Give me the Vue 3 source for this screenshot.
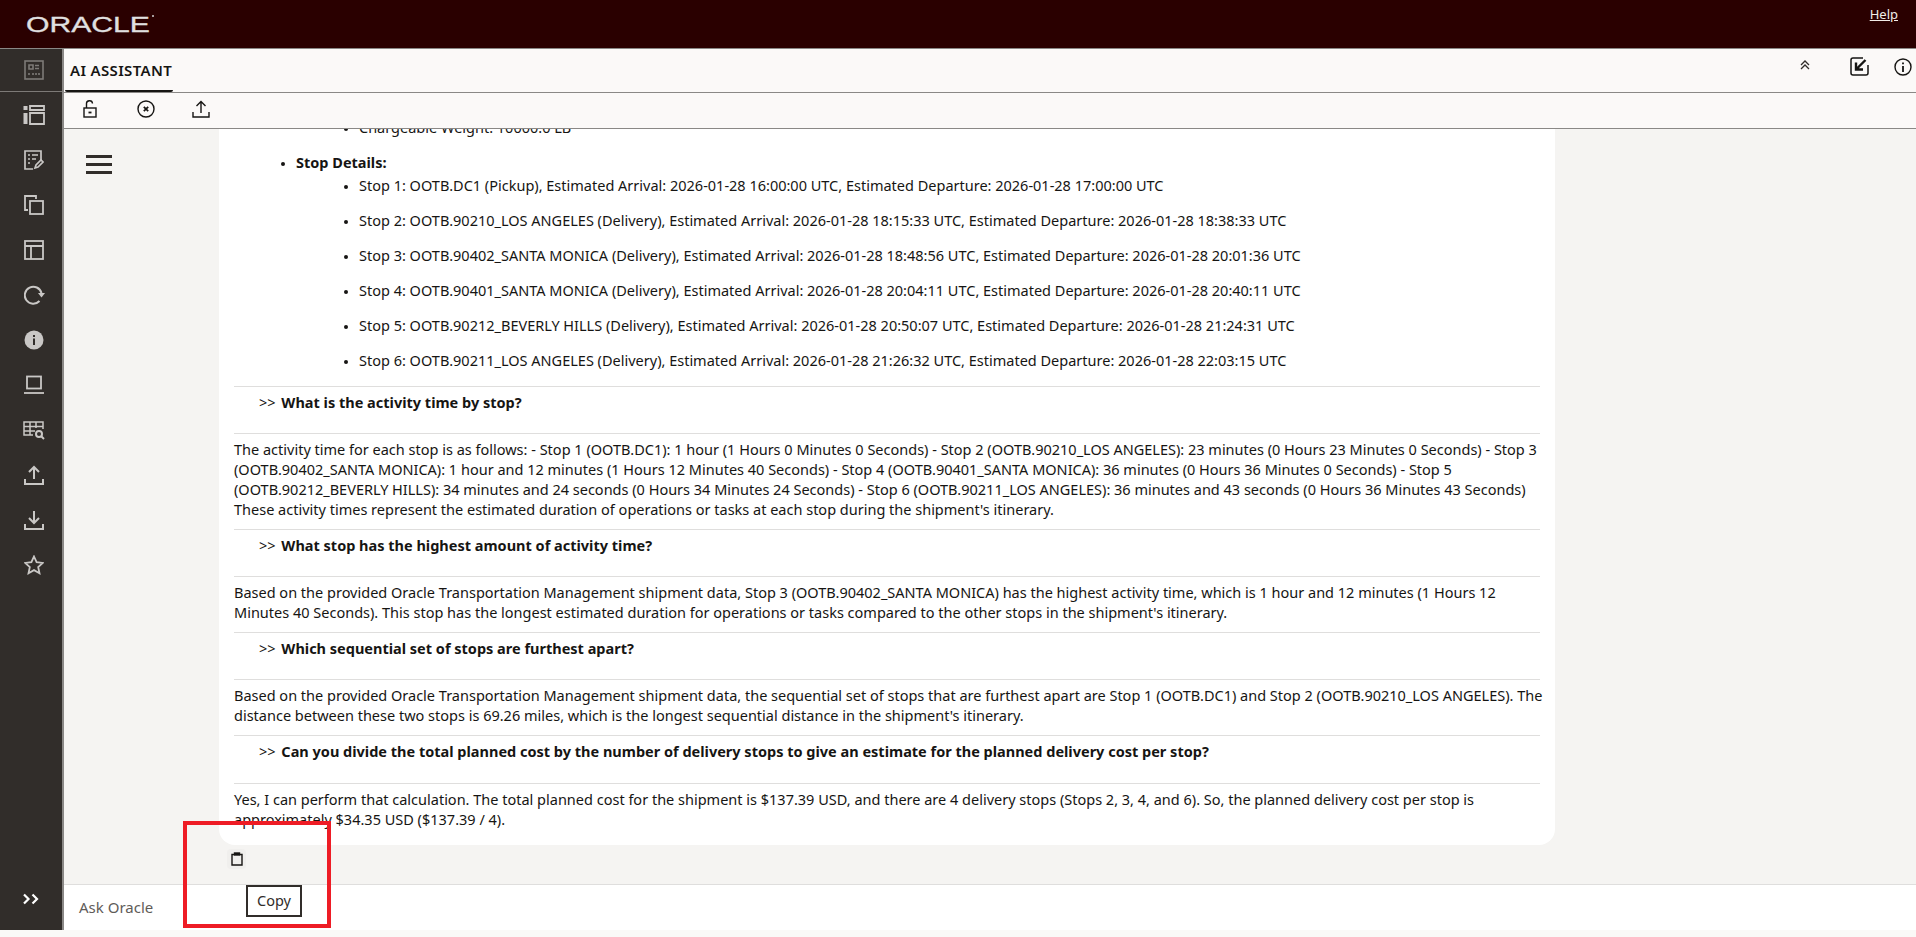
<script setup>
const stops = [
  'Stop 1: OOTB.DC1 (Pickup), Estimated Arrival: 2026-01-28 16:00:00 UTC, Estimated Departure: 2026-01-28 17:00:00 UTC',
  'Stop 2: OOTB.90210_LOS ANGELES (Delivery), Estimated Arrival: 2026-01-28 18:15:33 UTC, Estimated Departure: 2026-01-28 18:38:33 UTC',
  'Stop 3: OOTB.90402_SANTA MONICA (Delivery), Estimated Arrival: 2026-01-28 18:48:56 UTC, Estimated Departure: 2026-01-28 20:01:36 UTC',
  'Stop 4: OOTB.90401_SANTA MONICA (Delivery), Estimated Arrival: 2026-01-28 20:04:11 UTC, Estimated Departure: 2026-01-28 20:40:11 UTC',
  'Stop 5: OOTB.90212_BEVERLY HILLS (Delivery), Estimated Arrival: 2026-01-28 20:50:07 UTC, Estimated Departure: 2026-01-28 21:24:31 UTC',
  'Stop 6: OOTB.90211_LOS ANGELES (Delivery), Estimated Arrival: 2026-01-28 21:26:32 UTC, Estimated Departure: 2026-01-28 22:03:15 UTC'
]
const qa = [
  {
    q: 'What is the activity time by stop?',
    a: "The activity time for each stop is as follows: - Stop 1 (OOTB.DC1): 1 hour (1 Hours 0 Minutes 0 Seconds) - Stop 2 (OOTB.90210_LOS ANGELES): 23 minutes (0 Hours 23 Minutes 0 Seconds) - Stop 3 (OOTB.90402_SANTA MONICA): 1 hour and 12 minutes (1 Hours 12 Minutes 40 Seconds) - Stop 4 (OOTB.90401_SANTA MONICA): 36 minutes (0 Hours 36 Minutes 0 Seconds) - Stop 5 (OOTB.90212_BEVERLY HILLS): 34 minutes and 24 seconds (0 Hours 34 Minutes 24 Seconds) - Stop 6 (OOTB.90211_LOS ANGELES): 36 minutes and 43 seconds (0 Hours 36 Minutes 43 Seconds) These activity times represent the estimated duration of operations or tasks at each stop during the shipment's itinerary."
  },
  {
    q: 'What stop has the highest amount of activity time?',
    a: "Based on the provided Oracle Transportation Management shipment data, Stop 3 (OOTB.90402_SANTA MONICA) has the highest activity time, which is 1 hour and 12 minutes (1 Hours 12 Minutes 40 Seconds). This stop has the longest estimated duration for operations or tasks compared to the other stops in the shipment's itinerary."
  },
  {
    q: 'Which sequential set of stops are furthest apart?',
    a: "Based on the provided Oracle Transportation Management shipment data, the sequential set of stops that are furthest apart are Stop 1 (OOTB.DC1) and Stop 2 (OOTB.90210_LOS ANGELES). The distance between these two stops is 69.26 miles, which is the longest sequential distance in the shipment's itinerary."
  },
  {
    q: 'Can you divide the total planned cost by the number of delivery stops to give an estimate for the planned delivery cost per stop?',
    a: 'Yes, I can perform that calculation. The total planned cost for the shipment is $137.39 USD, and there are 4 delivery stops (Stops 2, 3, 4, and 6). So, the planned delivery cost per stop is approximately $34.35 USD ($137.39 / 4).'
  }
]
</script>

<template>
  <div class="page">
    <header class="topbar">
      <svg class="logo" width="130" height="28" viewBox="0 0 130 28">
        <text x="0" y="21" textLength="124" lengthAdjust="spacingAndGlyphs" class="logo-text">ORACLE</text>
        <circle cx="127" cy="5" r="1" fill="#cfcfcf" />
      </svg>
      <a class="help">Help</a>
    </header>

    <div class="body">
      <nav class="rail">
        <div class="rail-top">
          <svg width="20" height="20" viewBox="0 0 20 20" fill="none" stroke="#7d7a77" stroke-width="1.6"><rect x="1" y="1" width="18" height="18" /><path d="M5 5h4v4H5zM11 5.5h4M11 8.5h4M5 13v2M9 13v2M12 13v2M15 13v2" /></svg>
        </div>
        <div class="rail-list">
          <span class="rail-item"><svg width="22" height="20" viewBox="0 0 22 20" fill="none" stroke="#c9c7c5" stroke-width="1.8"><path d="M7 1h14v4H7zM7 8h14v11H7z" /><path d="M2.500 1v4M2.500 8v11" stroke-width="4" /></svg></span>
          <span class="rail-item"><svg width="20" height="20" viewBox="0 0 20 20" fill="none" stroke="#c9c7c5" stroke-width="1.7"><path d="M9 19H1V1h16v9" /><path d="M4 5h2M8 5h6M4 9h2M8 9h4M4 13h2" /><path d="M11 18l1-3 5-5 2 2-5 5z" /></svg></span>
          <span class="rail-item"><svg width="20" height="20" viewBox="0 0 20 20" fill="none" stroke="#c9c7c5" stroke-width="1.8"><path d="M4 15H1V1h11v3" /><rect x="6" y="6" width="13" height="13" /></svg></span>
          <span class="rail-item"><svg width="20" height="20" viewBox="0 0 20 20" fill="none" stroke="#c9c7c5" stroke-width="1.8"><rect x="1" y="1" width="18" height="18" /><path d="M1 6h18M7 6v13" /></svg></span>
          <span class="rail-item"><svg width="21" height="20" viewBox="0 0 21 20" fill="none" stroke="#c9c7c5" stroke-width="2"><path d="M15.500 16A8.500 8.500 0 1 1 17.500 8" /><path d="M14 8h7l-3.500 4.500z" fill="#c9c7c5" stroke="none" /></svg></span>
          <span class="rail-item"><svg width="20" height="20" viewBox="0 0 20 20"><circle cx="10" cy="10" r="9.500" fill="#c9c7c5" /><rect x="9" y="8.500" width="2" height="6.500" fill="#312d2a" /><rect x="9" y="5" width="2" height="2" fill="#312d2a" /></svg></span>
          <span class="rail-item"><svg width="20" height="20" viewBox="0 0 20 20" fill="none" stroke="#c9c7c5" stroke-width="1.8"><rect x="3" y="1.500" width="14" height="12" /><path d="M0 18h20" /></svg></span>
          <span class="rail-item"><svg width="22" height="20" viewBox="0 0 22 20" fill="none" stroke="#c9c7c5" stroke-width="1.5"><path d="M10 15H1V2h19v7M1 6.500h19M1 11h11M7 2v13M13 2v6" /><circle cx="16" cy="14" r="3" stroke-width="2" /><path d="M18 16l3 3" stroke-width="2" /></svg></span>
          <span class="rail-item"><svg width="20" height="20" viewBox="0 0 20 20" fill="none" stroke="#c9c7c5" stroke-width="2"><path d="M10 14V2M5 7l5-5 5 5M1 14v5h18v-5" /></svg></span>
          <span class="rail-item"><svg width="20" height="20" viewBox="0 0 20 20" fill="none" stroke="#c9c7c5" stroke-width="2"><path d="M10 1v12M5 8l5 5 5-5M1 14v5h18v-5" /></svg></span>
          <span class="rail-item"><svg width="20" height="20" viewBox="0 0 20 20" fill="none" stroke="#c9c7c5" stroke-width="1.8"><path d="M10 1.500l2.600 5.700 6.200.7-4.600 4.200 1.300 6.100L10 15.100l-5.500 3.100 1.300-6.100L1.200 7.900l6.200-.7z" /></svg></span>
        </div>
        <div class="rail-foot">
          <svg width="16" height="12" viewBox="0 0 16 12" fill="none" stroke="#fff" stroke-width="2.200"><path d="M1 1.500L5.500 6 1 10.500M9.500 1.500L14 6l-4.500 4.500" /></svg>
        </div>
      </nav>

      <div class="workspace">
        <div class="tabbar">
          <div class="tab">AI ASSISTANT</div>
          <div class="tab-tools">
            <svg class="chev" width="10" height="10" viewBox="0 0 10 10" fill="none" stroke="#312d2a" stroke-width="1.300"><path d="M1 5l4-4 4 4M1 9l4-4 4 4" /></svg>
            <svg class="collapse" width="19" height="19" viewBox="0 0 19 19" fill="none" stroke="#161513" stroke-width="1.500"><path d="M18 8v8a2 2 0 0 1-2 2H3a2 2 0 0 1-2-2V3a2 2 0 0 1 2-2h10" /><path d="M15.500 3L6.500 12M6 5.500V12.500H13" stroke-width="2.400" /></svg>
            <svg class="info" width="18" height="18" viewBox="0 0 18 18" fill="none" stroke="#161513" stroke-width="1.400"><circle cx="9" cy="9" r="8" /><path d="M9 8v6M9 4.500v1.800" stroke-width="1.800" /></svg>
          </div>
        </div>
        <div class="toolbar">
          <svg class="lock" width="14" height="18" viewBox="0 0 14 18" fill="none" stroke="#161513" stroke-width="1.400"><rect x="1" y="8" width="12" height="9" /><path d="M3.500 8V4a3 3 0 0 1 6-.5" /><path d="M5.500 12.500h3" stroke-width="1.800" /></svg>
          <svg width="18" height="18" viewBox="0 0 18 18" fill="none" stroke="#161513" stroke-width="1.400"><circle cx="9" cy="9" r="8" /><path d="M6.800 6.800l4.400 4.400M11.200 6.800l-4.400 4.400" stroke-width="1.700" /></svg>
          <svg width="18" height="18" viewBox="0 0 18 18" fill="none" stroke="#161513" stroke-width="1.400"><path d="M9 13V1.500M4.500 6L9 1.500 13.500 6M1 12v5h16v-5" /></svg>
        </div>

        <div class="chat">
          <div class="drawer">
            <div class="burger"><i></i><i></i><i></i></div>
          </div>
          <div class="thread">
            <section class="card">
              <ul class="outer">
                <li class="no-marker">
                  <ul class="inner"><li>Chargeable Weight: 10000.0 LB</li></ul>
                </li>
                <li>
                  <b>Stop Details:</b>
                  <ul class="inner nested">
                    <li v-for="s in stops" :key="s">{{ s }}</li>
                  </ul>
                </li>
              </ul>
              <div v-for="item in qa" :key="item.q" class="qa">
                <div class="question">&gt;&gt; <b>{{ item.q }}</b></div>
                <div class="answer"><p>{{ item.a }}</p></div>
              </div>
            </section>
            <div class="copy-row">
              <span class="copy-btn">
                <svg width="12" height="14" viewBox="0 0 12 14" fill="none" stroke="#161513" stroke-width="1.400"><path d="M3.500 2.500H1v10.500h10V2.500H8.500" /><rect x="3.500" y="1" width="5" height="2" fill="#161513" /></svg>
              </span>
            </div>
          </div>
        </div>

        <div class="askbar">Ask Oracle</div>
      </div>
    </div>
    <div class="strip"></div>

    <div class="tooltip">Copy</div>
    <div class="annotation"></div>
  </div>
</template>

<style>
html, body { margin: 0; padding: 0; }
</style>

<style scoped>
.page {
  position: relative;
  width: 1916px;
  height: 937px;
  display: flex;
  flex-direction: column;
  overflow: hidden;
  background: #faf9f7;
  font-family: "Noto Sans", "Open Sans", sans-serif;
  font-size: 14.500px;
  color: #161513;
}
.topbar {
  height: 49px;
  flex: none;
  background: #2a0000;
  border-bottom: 1px solid #8a8886;
  display: flex;
  align-items: flex-start;
  justify-content: space-between;
  padding: 0 18px 0 26px;
  box-sizing: border-box;
}
.logo { margin-top: 11px; }
.logo-text {
  font-family: "Liberation Sans", sans-serif;
  font-size: 22.300px;
  fill: #e0e0e0;
  stroke: #e0e0e0;
  stroke-width: 0.300px;
}
.help {
  margin-top: 5px;
  color: #f2ece8;
  font-size: 13px;
  line-height: 18px;
  text-decoration: underline;
}
.body { flex: 1; display: flex; min-height: 0; }
.rail {
  width: 62px;
  flex: none;
  background: #312d2a;
  border-right: 2px solid #8a8886;
  display: flex;
  flex-direction: column;
}
.rail-top {
  height: 42px;
  flex: none;
  display: flex;
  align-items: center;
  justify-content: center;
  border-bottom: 1px solid #7d7a77;
  padding-left: 6px;
}
.rail-list {
  flex: 1;
  display: flex;
  flex-direction: column;
  padding-left: 6px;
}
.rail-item {
  height: 45.100px;
  display: flex;
  align-items: center;
  justify-content: center;
}
.rail-foot {
  height: 37px;
  flex: none;
  display: flex;
  justify-content: center;
  align-items: flex-start;
  padding-top: 1px;
}
.workspace { flex: 1; min-width: 0; display: flex; flex-direction: column; }
.tabbar {
  height: 43px;
  flex: none;
  background: #fbf9f8;
  border-bottom: 1px solid #8a8886;
  display: flex;
  justify-content: space-between;
  align-items: stretch;
}
.tab {
  margin-left: 1px;
  padding: 0 0 0 5px;
  width: 103px;
  height: 41px;
  line-height: 43px;
  font-weight: 600;
  font-size: 15px;
  letter-spacing: 0.350px;
  color: #161513;
  border-bottom: 2px solid #161513;
  border-radius: 0 0 2px 2px;
  white-space: nowrap;
}
.tab-tools { display: flex; align-items: center; padding-right: 4px; }
.chev { margin-right: 40px; margin-bottom: 11px; }
.collapse { margin-right: 25px; margin-bottom: 9px; }
.info { margin-bottom: 7px; }
.toolbar {
  height: 35px;
  flex: none;
  background: #fbf9f8;
  border-bottom: 1px solid #8a8886;
  display: flex;
  align-items: center;
  gap: 37px;
  padding-left: 19px;
}
.toolbar svg { margin-bottom: 3px; }
.lock { margin-right: 3px; }
.chat { flex: 1; min-height: 0; display: flex; background: #f5f4f2; }
.drawer { width: 155px; flex: none; padding: 26px 0 0 22px; box-sizing: border-box; }
.burger { width: 26px; display: flex; flex-direction: column; gap: 5px; }
.burger i { display: block; height: 3px; background: #312d2a; }
.thread {
  flex: 1;
  min-width: 0;
  overflow: hidden;
  display: flex;
  flex-direction: column;
  justify-content: flex-end;
  align-items: flex-start;
}
.card {
  width: 1336px;
  flex: none;
  box-sizing: border-box;
  background: #fff;
  border-radius: 0 0 16px 16px;
  padding: 0 15px 6px;
  line-height: 20px;
  color: #161513;
}
.outer { margin: 0 0 16px; padding: 0 0 0 62px; list-style: disc; }
.outer > li { margin-top: 15px; }
.outer > li.no-marker { list-style: none; margin-top: 0; }
.outer li::marker { font-size: 12px; }
.inner { margin: 0; padding: 0 0 0 63px; list-style: disc; }
.inner.nested { margin-top: 3px; }
.inner li { margin-bottom: 15px; }
.inner li:last-child { margin-bottom: 0; }
.outer b { font-weight: 700; }
.question {
  border-top: 1px solid #dfdedd;
  padding: 5px 0 0 25px;
  height: 47px;
  box-sizing: border-box;
  line-height: 20px;
}
.qa:last-child .question { height: 48px; }
.question b { font-weight: 700; margin-left: 2px; }
.answer { border-top: 1px solid #dfdedd; padding: 5px 0 10px; }
.answer p { margin: 0 -6px 0 0; }
.copy-row { height: 39px; flex: none; padding: 4px 0 0 0; box-sizing: border-box; }
.copy-btn {
  width: 19px;
  height: 20px;
  margin-left: 8px;
  border-radius: 4px;
  background: #f0efed;
  display: flex;
  align-items: center;
  justify-content: center;
}
.askbar {
  height: 45px;
  flex: none;
  background: #fff;
  border-top: 1px solid #dfdedd;
  color: #5f5c59;
  font-size: 15px;
  line-height: 45px;
  padding-left: 15px;
}
.strip { height: 7px; flex: none; }
.tooltip {
  position: absolute;
  left: 246px;
  top: 885px;
  width: 56px;
  height: 32px;
  box-sizing: border-box;
  border: 2px solid #312d2a;
  background: #fff;
  text-align: center;
  line-height: 27px;
  font-size: 14.500px;
  color: #312d2a;
}
.annotation {
  position: absolute;
  left: 183px;
  top: 821px;
  width: 148px;
  height: 107px;
  box-sizing: border-box;
  border: 4px solid #ee1c25;
  pointer-events: none;
}
</style>
